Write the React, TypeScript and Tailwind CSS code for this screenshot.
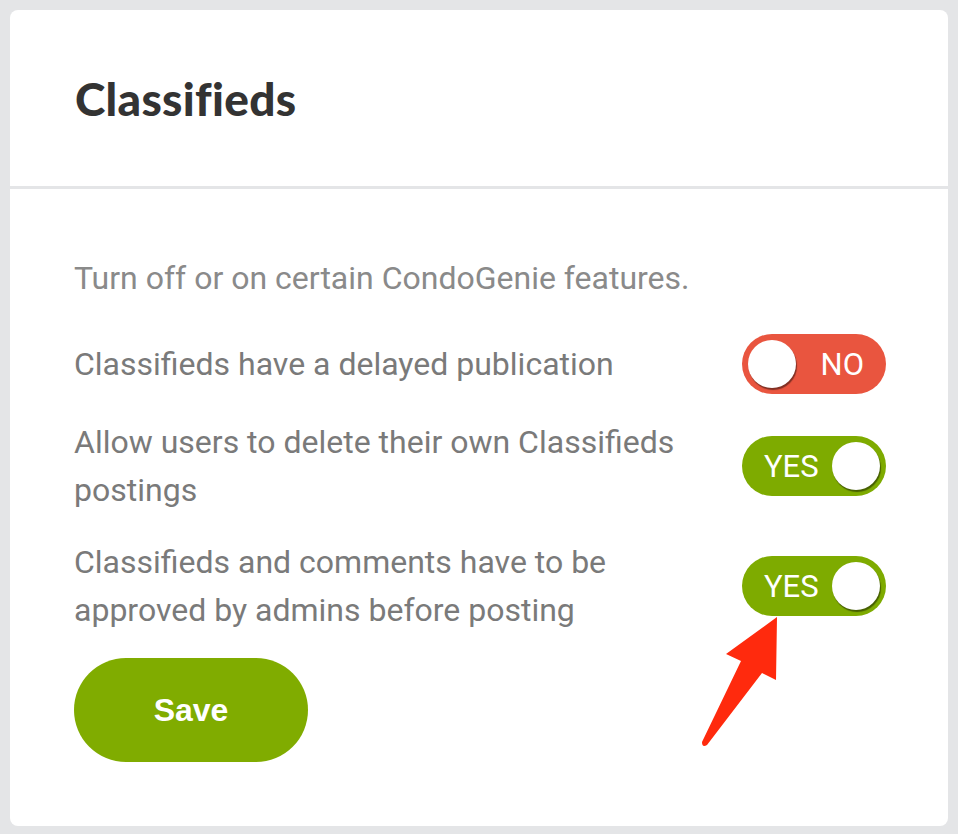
import React from 'react';

type Setting = { label: string; on: boolean };

const settings: Setting[] = [
  { label: 'Classifieds have a delayed publication', on: false },
  { label: 'Allow users to delete their own Classifieds postings', on: true },
  { label: 'Classifieds and comments have to be approved by admins before posting', on: true },
];

const Toggle = ({ on }: { on: boolean }) => (
  <div
    className={`flex h-[60px] w-[144px] shrink-0 items-center justify-between rounded-full px-[6px] ${
      on ? 'bg-[#7eab00]' : 'bg-[#e9553f]'
    }`}
  >
    {on ? (
      <>
        <span className="pl-[16px] text-[31px] leading-none text-white">YES</span>
        <span className="h-[48px] w-[48px] rounded-full bg-white shadow-[1px_2px_1px_rgba(0,0,0,0.45)]" />
      </>
    ) : (
      <>
        <span className="h-[48px] w-[48px] rounded-full bg-white shadow-[1px_2px_1px_rgba(0,0,0,0.45)]" />
        <span className="pr-[16px] text-[31px] leading-none text-white">NO</span>
      </>
    )}
  </div>
);

const App = () => {
  return (
    <div className="relative min-h-[834px] w-[958px] bg-[#e4e5e7] p-[10px] font-['Roboto',sans-serif]">
      <div className="overflow-hidden rounded-lg bg-white">
        {/* Header */}
        <div className="flex h-[179px] items-center border-b-[3px] border-[#e4e5e7] px-[65px]">
          <h1 className="font-['Lato',sans-serif] text-[46px] font-black tracking-[0.3px] text-[#333333]">Classifieds</h1>
        </div>

        {/* Body */}
        <div className="pl-[64px] pr-[62px] pt-[65px] pb-[64px]">
          <p className="text-[32px] leading-[48px] text-[#8a8a8a]">Turn off or on certain CondoGenie features.</p>

          <div className="mt-[32px] flex flex-col gap-[24px]">
            {settings.map((s, i) => (
              <div key={i} className="flex items-center justify-between">
                <p className="max-w-[640px] text-[32px] leading-[48px] text-[#7a7a7a]">{s.label}</p>
                <Toggle on={s.on} />
              </div>
            ))}
          </div>

          <button className="mt-[24px] h-[104px] w-[234px] rounded-full bg-[#80ac00] font-['Liberation_Sans',sans-serif] text-[32px] font-bold text-white">
            Save
          </button>
        </div>
      </div>

      {/* annotation arrow */}
      <svg className="pointer-events-none absolute left-0 top-0" width="958" height="834" viewBox="0 0 958 834">
        <path
          d="M777 617 L726 654 L741 661 L702 742 Q702 748 707 745 L762 673 L776 680 Z"
          fill="#ff2a0d"
        />
      </svg>
    </div>
  );
};

export default App;
